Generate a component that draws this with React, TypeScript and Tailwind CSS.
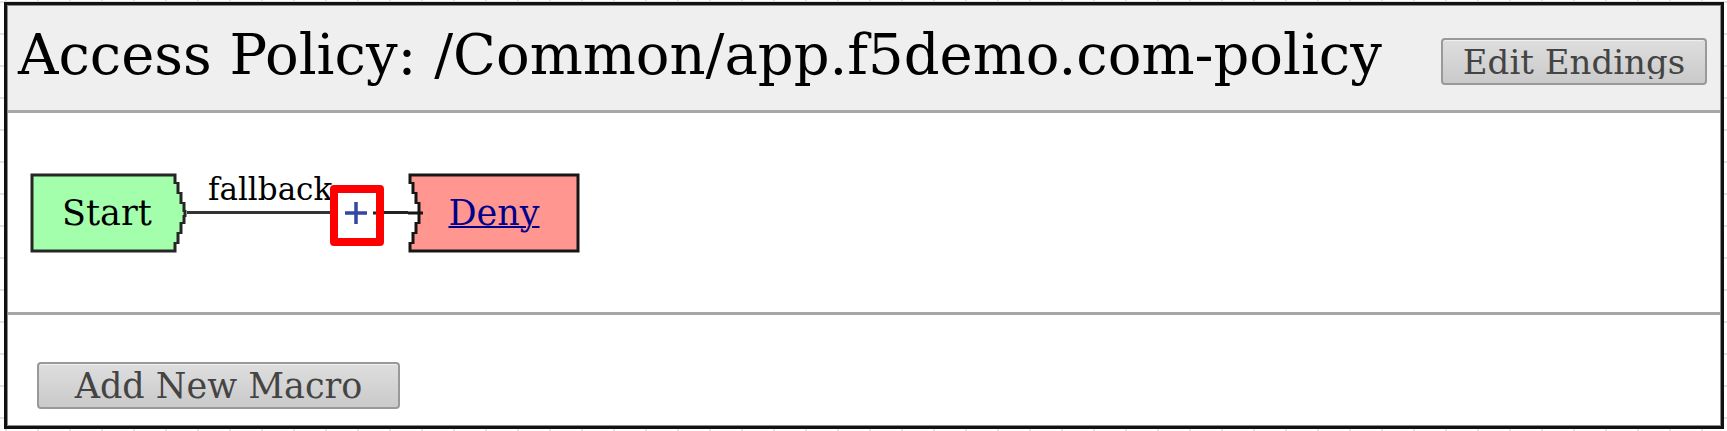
const gridBackground =
  "bg-white bg-[repeating-linear-gradient(to_right,transparent_0_5px,#e2e2e2_5px_7px,transparent_7px_32px),repeating-linear-gradient(to_bottom,transparent_0_1px,#e2e2e2_1px_3px,transparent_3px_32px)]";

const macroButton =
  "flex h-[47px] shrink-0 items-start justify-center rounded border-2 border-[#999] bg-linear-to-b from-[#dedede] to-[#cacaca] pt-0.5 leading-[40px] text-[#444] shadow-[inset_0_1px_0_#f0f0f0]";

function StartNode() {
  return (
    <div className="relative flex h-20 w-[157px] items-center pt-0.5 pl-8 text-[35px] leading-none">
      <svg className="absolute inset-0 h-full w-full" viewBox="0 0 157 80" aria-hidden="true">
        <path d="M2 2H145V10H149V20H152V30H155V50H152V60H149V70H145V78H2Z" fill="#a3ffac" />
        <path
          d="M145 11V2H2V78H145V69M148 9V21M151 19V31M154 29V39M155 37V44M154 42V51M151 49V61M148 59V71"
          fill="none"
          stroke="#262626"
          strokeWidth="3"
        />
      </svg>
      <span className="relative">Start</span>
    </div>
  );
}

function DenyNode() {
  return (
    <div className="relative flex h-20 w-[172px] items-center justify-center pt-0.5 text-[35px] leading-none">
      <svg className="absolute inset-0 h-full w-full" viewBox="0 0 172 80" aria-hidden="true">
        <path d="M2 2H170V78H2V70H5V60H8V50H11V30H8V20H5V10H2Z" fill="#ff9790" />
        <path
          d="M2 11V2H170V78H2V69M5 9V21M8 19V31M11 29V51M8 49V61M5 59V71M0 40H15"
          fill="none"
          stroke="#161616"
          strokeWidth="3"
        />
      </svg>
      <a href="#deny" className="relative text-[#00008b] underline decoration-2">Deny</a>
    </div>
  );
}

export default function App() {
  return (
    <div className={`min-h-screen py-0.5 pr-[3px] pl-1 font-['DejaVu_Serif',serif] text-black ${gridBackground}`}>
      <main className="border-3 border-[#111]">
        <div className="border border-[#8c8c8c] bg-white">
          <header className="flex h-[107px] items-center justify-between border-b-3 border-[#a6a6a6] bg-[#efefef] pr-[13px] pl-[10px]">
            <h1 className="pb-1.5 text-[56px] leading-none whitespace-nowrap">
              Access Policy: /Common/app.f5demo.com-policy
            </h1>
            <button type="button" className={`${macroButton} mt-1.5 w-[266px] text-[34px]`}>
              <span className="block h-[37px] overflow-hidden">Edit Endings</span>
            </button>
          </header>
          <section className="flex h-[202px] items-center border-b-3 border-[#a6a6a6] pl-[22px]">
            <StartNode />
            <div className="relative h-[3px] w-[143px] bg-[#333]">
              <span className="absolute bottom-[7px] left-[21px] text-[31px] leading-[36px]">fallback</span>
            </div>
            <button
              type="button"
              aria-label="Insert item"
              className="relative mt-1.5 flex h-[61px] w-[54px] items-center justify-center rounded border-8 border-[#f00] bg-white pb-1.5"
            >
              <svg className="h-6 w-[38px] shrink-0" viewBox="0 0 38 24" aria-hidden="true">
                <path d="M18 1V23M7 12H29" stroke="#3347a3" strokeWidth="3.5" />
                <path d="M35 12H38" stroke="#222" strokeWidth="3" />
              </svg>
            </button>
            <div className="h-[3px] w-6 bg-[#222]" />
            <DenyNode />
          </section>
          <footer className="px-[29px] pt-[47px] pb-4">
            <button type="button" className={`${macroButton} w-[363px] text-[35px]`}>Add New Macro</button>
          </footer>
        </div>
      </main>
    </div>
  );
}
